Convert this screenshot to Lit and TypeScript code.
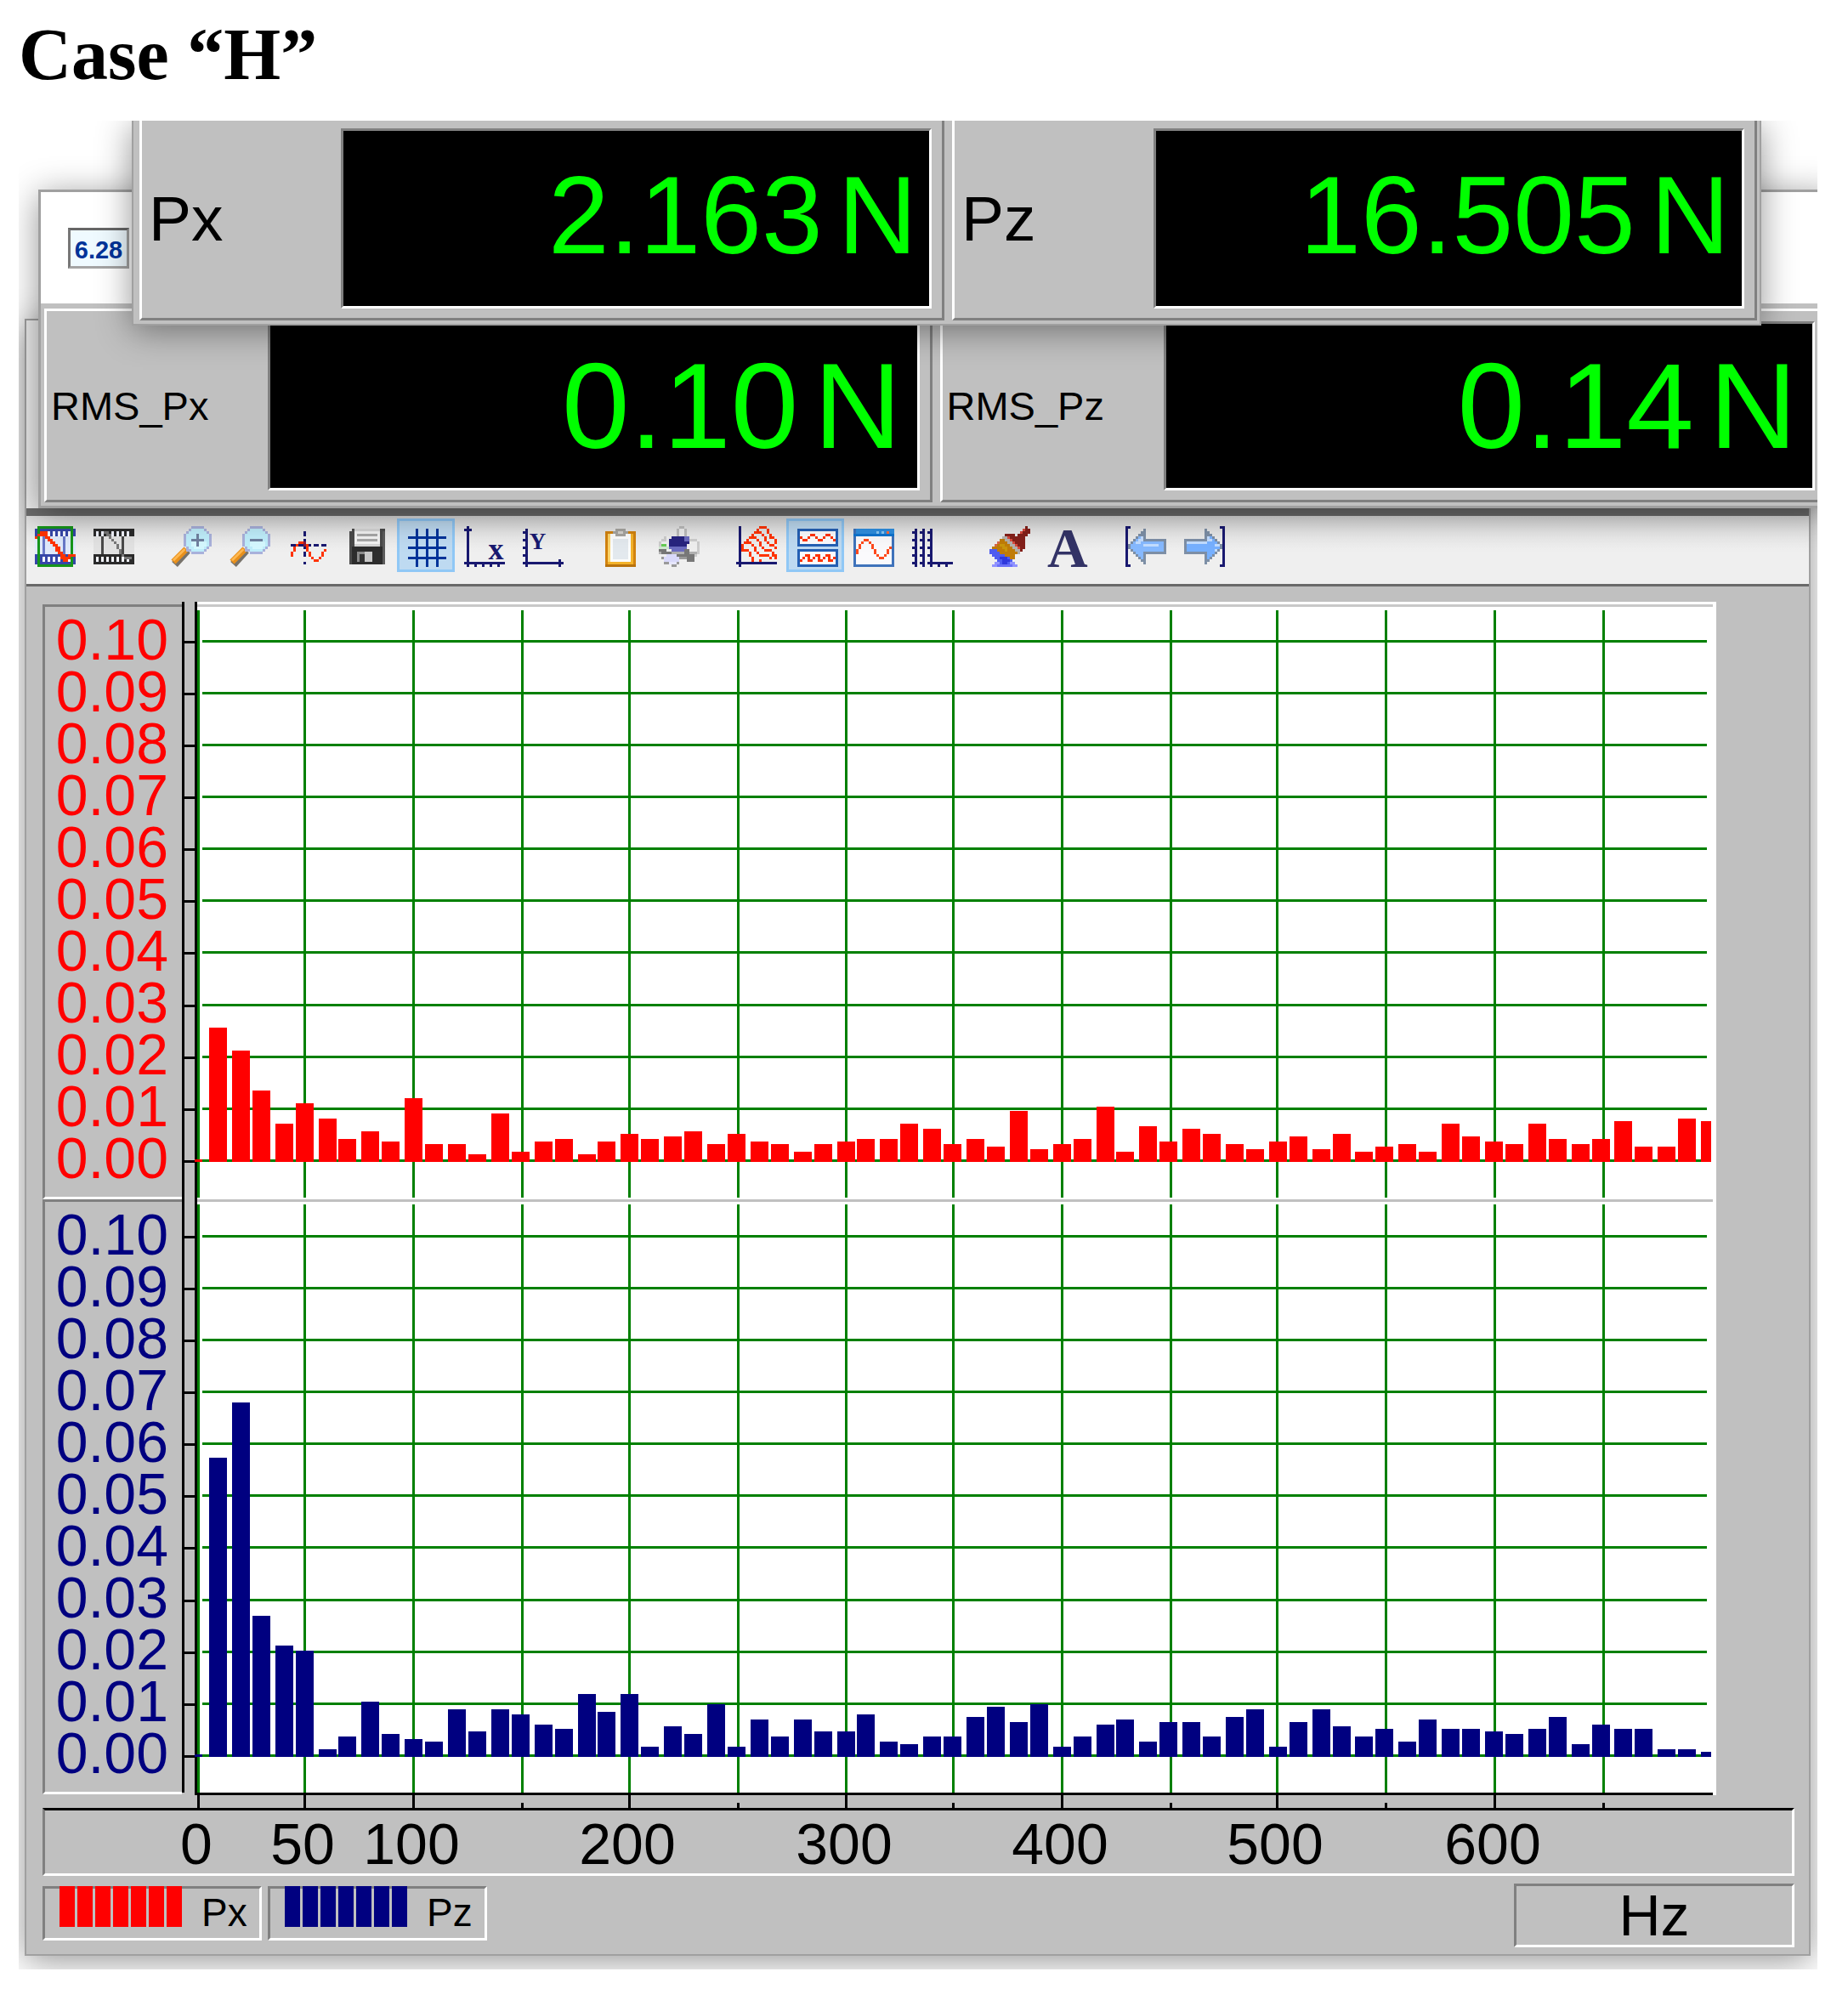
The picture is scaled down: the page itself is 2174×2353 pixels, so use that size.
import { LitElement, html, css, svg } from "lit";
import { customElement, property } from "lit/decorators.js";

/* Plot geometry: horizontal values are turned into percentages of the plot width. */
const PLOT_W = 1787;
const pct = (x: number) => `${((x / PLOT_W) * 100).toFixed(4)}%`;
const GRID_X = [1, 126, 254, 382, 508, 636, 763, 889, 1017, 1145, 1270, 1398, 1526, 1654];

const RED = [
  158, 131, 84, 45, 69, 51, 27, 36, 24, 75, 21, 21, 9, 57, 12, 24, 27, 9, 24, 33, 27, 30, 36, 21, 33, 24, 21, 12, 21, 24,
  27, 27, 45, 39, 21, 27, 18, 60, 15, 21, 27, 65, 12, 42, 24, 39, 33, 21, 15, 24, 30, 15, 33, 12, 18, 21, 12, 45, 30, 24,
  21, 45, 27, 21, 27, 48, 18, 18, 51, 48,
];
const BLUE = [
  352, 417, 166, 131, 125, 9, 24, 65, 27, 21, 18, 56, 30, 56, 50, 38, 33, 74, 53, 74, 12, 36, 27, 62, 12, 44, 24, 44, 30,
  30, 50, 18, 15, 24, 24, 47, 59, 41, 62, 12, 24, 38, 44, 18, 41, 41, 24, 47, 56, 12, 41, 56, 36, 24, 33, 18, 44, 33, 33,
  30, 27, 33, 47, 15, 38, 33, 33, 9, 9, 6,
];
const SCALE = ["0.10", "0.09", "0.08", "0.07", "0.06", "0.05", "0.04", "0.03", "0.02", "0.01", "0.00"];
const ZERO = [657, 1357];
const rowY = (zero: number, i: number) => Math.round(zero - i * 61.15);

/* Filled cells of a 16 by 16 icon, each given as "x y w h". */
const cells = (fill: string, list: string) =>
  svg`<path fill=${fill} d=${list
    .split(",")
    .map((c) => {
      const [x, y, w, h] = c.trim().split(" ");
      return `M${x} ${y}h${w}v${h}h-${w}z`;
    })
    .join("")} />`;

const NAVY = "#191970";
const HOT = "#ff3300";

const film = (frame: string, paper: string, bar: string) => svg`
  ${cells(frame, "0 1 16 3,0 11 16 4")}
  ${cells(paper, "0 4 16 7")}
  ${cells("#f4f6ff", "1 2 1 2,3 2 1 2,5 2 1 2,7 2 1 2,9 2 1 2,11 2 1 2,13 2 1 2,1 12 1 2,3 12 1 2,5 12 1 2,7 12 1 2,9 12 1 2,11 12 1 2,13 12 1 2")}
  ${cells(bar, "3 4 1 7,11 4 1 7")}`;

const lens = (sign: string) => svg`
  <path d="M6.5 9.5L1.5 15" stroke="#77726a" stroke-width="3" shape-rendering="auto" />
  <path d="M6 9L1 14" stroke="#e8901c" stroke-width="2.4" shape-rendering="auto" />
  <path d="M5.5 9L1 13.4" stroke="#ffb850" stroke-width="0.9" shape-rendering="auto" />
  <path fill="#a9b1db" d="M8 0h5v1h1v1h1v1h1v5h-1v1h-1v1h-1v1h-5v-1h-2v-2h-1v-5h1v-1h1v-1h1z" />
  <path fill="#bfeefb" d="M8 1h5v1h1v1h1v5h-1v1h-1v1h-5v-1h-1v-1h-1v-5h1v-1h1z" />
  <path fill="#d5f8ff" d="M8 6h6v2h-1v1h-4v-1h-1z" />
  ${cells("#70809f", sign)}`;

const ICONS: Record<string, unknown> = {
  record: svg`${film("#3646a8", "#dfe9fb", "#6878c8")}
    <rect x="1.5" y="0.5" width="13" height="15" fill="none" stroke="#16961a" />
    ${cells(HOT, "0 4 1 1,1 3 2 1,2 2 3 1,3 3 2 1,4 4 2 1,5 5 2 1,6 6 2 1,7 7 2 1,8 8 2 1,8 9 2 1,9 10 2 1,10 11 2 1,10 12 4 1,11 13 2 1,13 11 3 1")}`,
  frames: svg`${film("#2b2b2b", "#e2e2e2", "#4a4a4a")}
    ${cells("#777777", "4 2 2 1,5 3 2 1,6 4 1 1,7 5 1 1,8 6 1 1,9 7 1 1,9 8 1 1,10 9 1 1,10 10 1 1,11 11 1 1,12 12 3 1")}`,
  zoomIn: lens("8 5 5 1,10 3 1 5"),
  zoomOut: lens("8 5 5 1"),
  cursor: svg`
    ${cells(HOT, "1 10 1 2,2 8 1 2,3 7 1 1,4 6 3 1,6 7 2 1,7 8 1 2,8 10 1 2,9 12 1 1,10 13 2 1,12 12 1 1,13 10 1 2,14 9 1 1")}
    ${cells(NAVY, "6 2 1 2,6 5 1 1,6 8 1 1,6 10 1 2,6 14 1 1,1 7 2 1,4 7 2 1,8 7 1 1,10 7 2 1,13 7 2 1")}
    ${cells("#8a1a3a", "6 6 1 2")}`,
  save: svg`
    ${cells("#4a4a4a", "1 2 2 13,2 1 13 14")}${cells("#2d2d2d", "2 8 12 7")}
    ${cells("#f3f3f3", "3 2 10 5")}${cells("#d6d6d6", "3 7 10 1,3 1 10 1")}
    ${cells("#a8a8a8", "4 3 8 1,4 5 8 1")}
    ${cells("#8b8b8b", "4 10 3 4")}${cells("#c9c9c9", "7 10 3 4")}${cells("#333333", "5 11 2 3")}${cells("#5c5c5c", "14 2 1 13")}`,
  grid: cells("#003399", "4 1 1 15,8 1 1 15,12 1 1 15,1 4 15 1,1 8 15 1,1 12 15 1"),
  axisX: svg`${cells(NAVY, "1 0 1 16,0 1 3 1,0 14 16 1,4 15 1 1,7 15 1 1,10 15 1 1,13 15 1 1")}
    <text x="12.5" y="13" class="mark">x</text>`,
  axisY: svg`${cells(NAVY, "1 1 1 15,0 2 1 1,0 5 1 1,0 8 1 1,0 11 1 1,0 14 16 1,14 13 1 3")}
    <text x="5.8" y="9" class="mark small">Y</text>`,
  paste: svg`
    ${cells("#d2830f", "2 2 12 14")}${cells("#f3b22a", "3 3 10 12")}${cells("#fbd36a", "3 3 1 11")}
    ${cells("#fbfcfc", "4 3 8 11")}${cells("#e3e9ee", "5 5 6 8")}${cells("#b8720c", "2 15 12 1")}
    ${cells("#a7a5a0", "5 2 6 1,6 1 4 1,6 3 4 1")}${cells("#d5d3cf", "7 2 2 1")}`,
  print: svg`
    ${cells("#bdbdbd", "7 1 1 4,8 0 2 1,10 1 1 4")}${cells("#eeeeee", "8 1 2 4")}
    ${cells("#cccccc", "2 4 2 1,1 5 2 1,0 6 1 3,12 5 3 1,15 6 1 5,14 11 1 1")}
    ${cells("#eeeeee", "3 4 1 2,1 6 3 2,12 6 3 5")}${cells("#cfe8cf", "0 8 4 1")}${cells("#66cc55", "1 7 2 1")}
    ${cells("#28247f", "5 4 5 1,4 5 7 1,4 6 8 1,4 7 7 1")}${cells("#6c6cc0", "10 4 2 2,4 8 7 1,5 9 6 1")}
    ${cells("#777777", "0 9 3 1,1 10 4 1,10 9 2 2,6 11 5 1,11 11 3 3")}
    ${cells("#b0b0b0", "0 10 1 1,12 10 3 1,5 10 5 1")}
    ${cells("#d9d9fa", "3 11 4 1,2 12 6 2")}${cells("#999999", "1 12 1 1,2 14 2 1,5 15 2 1,7 14 1 1,8 12 3 1")}${cells("#e6e6fc", "4 14 3 1")}`,
  surface: svg`${cells(NAVY, "1 0 1 16,0 14 16 1")}
    ${cells(HOT, "9 0 3 1,8 1 1 1,7 2 1 1,6 3 1 1,5 4 1 1,4 5 1 1,3 6 1 1,2 7 1 3")}
    ${cells(HOT, "12 1 1 2,13 3 1 1,13 4 2 1,15 5 1 2")}
    ${cells(HOT, "8 2 2 1,10 3 1 1,11 4 1 2,12 6 1 1,13 7 2 1,15 8 1 1")}
    ${cells(HOT, "6 4 2 1,8 5 1 1,9 6 1 2,10 8 1 1,11 9 3 1,14 10 1 1")}
    ${cells(HOT, "4 6 2 1,6 7 1 1,7 8 1 2,8 10 1 1,9 11 4 1,14 11 2 1,13 12 1 1,15 12 1 1")}
    ${cells(HOT, "3 9 2 1,5 10 1 2,6 12 1 2,9 13 1 1")}`,
  stacked: svg`<g transform="translate(1 0)">
    ${cells("#2460b4", "0 1 16 7,0 9 16 7")}${cells("#fbfbfd", "1 2 14 5,1 10 14 5")}
    ${cells(HOT, "1 4 1 1,2 5 2 1,4 4 1 1,5 3 2 1,7 4 1 1,8 5 2 1,10 4 1 1,11 3 2 1,13 4 1 1,14 5 1 1")}
    ${cells(HOT, "1 13 1 1,2 12 1 1,3 11 2 1,4 12 1 1,4 13 2 1,6 12 1 1,7 11 2 1,8 12 1 1,8 13 2 1,10 12 1 1,11 11 2 1,12 12 1 1,12 13 2 1,14 12 1 1")}</g>`,
  panel: svg`
    ${cells("#3f73bb", "0 1 16 15")}${cells("#fafafc", "1 4 14 11")}${cells("#2f8fe0", "1 1 15 2")}${cells("#0f74cf", "0 3 16 1")}
    ${cells("#8cc8f4", "9 2 1 1,11 2 1 1")}${cells("#ff6a3a", "13 2 1 1")}
    ${cells("#ff4a1c", "1 9 1 2,2 7 1 2,3 6 1 1,4 5 2 1,6 6 1 1,7 7 1 2,8 9 1 2,9 11 1 1,10 12 2 1,12 11 1 1,13 9 1 2,14 8 1 1")}`,
  cascade: cells(
    NAVY,
    "1 1 1 15,4 1 1 15,7 1 1 15,0 2 1 1,0 5 1 1,0 8 1 1,0 11 1 1,0 14 1 1,3 2 1 1,3 5 1 1,3 8 1 1,3 11 1 1,3 14 1 1,6 2 1 1,6 5 1 1,6 8 1 1,6 11 1 1,6 14 1 1,7 14 9 1,10 15 1 1,13 15 1 1",
  ),
  brush: svg`
    ${cells("#84201a", "14 0 1 1,13 1 3 1,12 2 4 1,6 3 4 1,11 3 4 1,7 4 7 1,8 5 6 1,9 6 5 1,10 7 4 1,11 8 3 1,12 9 1 1")}
    ${cells("#d8493c", "13 1 1 1,12 2 1 1,7 4 1 1,8 5 1 1,9 6 1 1,10 7 1 1,11 8 1 1")}
    ${cells("#b4b0ac", "5 4 2 1,6 5 2 1,7 6 2 1,8 7 2 1,9 8 2 1,10 9 2 1,11 10 1 1")}
    ${cells("#c07c08", "4 5 2 1,3 6 4 1,2 7 6 1,1 8 8 1,3 9 7 1,4 10 7 1,6 11 4 1,8 12 2 1")}
    ${cells("#c9960c", "4 7 2 1,5 8 2 1,6 9 1 1")}${cells("#d8684a", "2 7 1 1,3 6 1 1")}
    ${cells("#4e5cf0", "0 9 3 1,0 10 4 1,1 11 5 1,2 12 6 1,3 13 6 1,2 14 7 1")}
    ${cells("#2f38dc", "4 12 3 1,5 13 3 1,5 14 2 1")}${cells("#8f92ff", "2 14 2 1,8 14 2 1,1 15 10 1")}${cells("#6a70f8", "3 15 6 1")}`,
  font: svg`<text x="7.6" y="16" class="big">A</text>`,
  back: svg`${cells(NAVY, "0 0 1 16,0 0 2 1,0 15 2 1")}
    <path fill="#7d8fa6" d="M7 1h1v4h8v6h-8v4h-1v-1h-1v-1h-1v-1h-1v-1h-1v-1h-1v-1h-1v-2h1v-1h1v-1h1v-1h1v-1h1v-1h1z" />
    <path fill="#86b9ff" d="M6 4h1v2h8v4h-8v3h-1v-1h-1v-1h-1v-1h-1v-1h-1v-2h1v-1h1v-1h1v-1h1z" />
    ${cells("#c3ddff", "6 4 1 2,5 5 1 2,4 6 1 1,7 7 6 1")}`,
  next: svg`${cells(NAVY, "15 0 1 16,14 0 1 1,14 15 1 1")}
    <path fill="#7d8fa6" d="M9 1h-1v4h-8v6h8v4h1v-1h1v-1h1v-1h1v-1h1v-1h1v-1h1v-2h-1v-1h-1v-1h-1v-1h-1v-1h-1v-1h-1z" />
    <path fill="#76b0ff" d="M10 4h-1v2h-8v4h8v3h1v-1h1v-1h1v-1h1v-1h1v-2h-1v-1h-1v-1h-1v-1h-1z" />
    ${cells("#c3ddff", "9 4 1 2,10 5 1 1,1 6 8 1,12 7 2 1,12 9 1 1")}`,
};

const TOOLBAR: [string, string][][] = [
  [["record", "Record"], ["frames", "Frames"]],
  [["zoomIn", "Zoom in"], ["zoomOut", "Zoom out"], ["cursor", "Cursor"], ["save", "Save"], ["grid", "Grid"], ["axisX", "X axis"], ["axisY", "Y axis"]],
  [["paste", "Copy"], ["print", "Print"]],
  [["surface", "Surface"], ["stacked", "Stacked"], ["panel", "Single"], ["cascade", "Cascade"]],
  [["brush", "Colours"], ["font", "Font"]],
  [["back", "Back"], ["next", "Next"]],
];
const PRESSED = ["grid", "stacked"];

@customElement("meter-cell")
export class MeterCell extends LitElement {
  @property() label = "";
  @property() value = "";

  static styles = css`
    :host {
      display: flex;
      flex: 1;
      min-width: 0;
      box-sizing: border-box;
      border: 3px solid #808080;
      border-left-color: #fff;
      border-top: var(--cell-top, 0) solid #fff;
      padding: var(--cell-pad, 9px) 12px 11px 0;
    }
    .label {
      flex: none;
      display: flex;
      align-items: center;
      box-sizing: border-box;
      width: var(--label-width, 234px);
      padding-left: var(--label-pad, 8px);
      font-size: var(--label-size, 75px);
      line-height: 1;
      color: #000;
    }
    .display {
      flex: 1;
      min-width: 0;
      display: flex;
      align-items: center;
      justify-content: flex-end;
      gap: 18px;
      height: var(--display-height, 206px);
      box-sizing: content-box;
      padding: 0 var(--display-pad, 14px) 0 0;
      border: 3px solid #fff;
      border-top-color: #808080;
      border-left-color: #808080;
      background: #000;
      color: #0f0;
      font-size: var(--value-size, 129px);
      line-height: 1;
    }
    .value,
    .unit {
      padding-bottom: var(--value-lift, 8px);
    }
  `;

  render() {
    return html`<div class="label">${this.label}</div>
      <div class="display"><span class="value">${this.value}</span><span class="unit">N</span></div>`;
  }
}

@customElement("tool-bar")
export class ToolBar extends LitElement {
  static styles = css`
    :host {
      display: flex;
      align-items: flex-start;
      gap: 23px;
      height: 77px;
      padding-top: 3px;
      background: linear-gradient(#dcdcdc, #eaeaea 24px, #efefef 40px);
      border-bottom: 3px solid #696969;
    }
    .group {
      display: flex;
      gap: 1px;
    }
    button {
      box-sizing: border-box;
      width: 68px;
      height: 63px;
      margin: 0;
      padding: 3px 0 0;
      border: 3px solid transparent;
      background: none;
      display: flex;
      align-items: center;
      justify-content: center;
    }
    button.on {
      background: #bedaf1;
      border-color: #90c8f6;
    }
    svg {
      width: 48px;
      height: 48px;
      overflow: visible;
    }
    .mark {
      font: bold 12px "Liberation Serif", serif;
      text-anchor: middle;
      fill: #191970;
    }
    .mark.small {
      font-size: 9px;
    }
    .big {
      font: bold 22px "Liberation Serif", serif;
      text-anchor: middle;
      fill: #333366;
    }
  `;

  render() {
    return TOOLBAR.map(
      (group) => html`<div class="group">
        ${group.map(
          ([icon, name]) => html`<button type="button" aria-label=${name} class=${PRESSED.includes(icon) ? "on" : ""}>
            <svg viewBox="0 0 16 16" shape-rendering="crispEdges" fill="none">${ICONS[icon]}</svg>
          </button>`,
        )}
      </div>`,
    );
  }
}

@customElement("spectrum-chart")
export class SpectrumChart extends LitElement {
  static styles = css`
    :host {
      display: block;
      padding: 18px 0 8px;
      background: #c0c0c0;
      color: #000;
    }
    svg {
      display: block;
      width: 100%;
      overflow: visible;
      shape-rendering: crispEdges;
    }
    .plot {
      display: grid;
      grid-template-columns: 164px 18px minmax(0, 1fr);
      margin: 0 109px 0 19px;
    }
    .scales {
      display: flex;
      flex-direction: column;
      padding-top: 3px;
    }
    .scale {
      box-sizing: border-box;
      height: 700px;
      border: 3px solid #808080;
      border-right: 0;
      border-bottom-color: #fff;
      padding: 8px 16px 0 0;
      font-size: 68px;
      line-height: 61px;
      text-align: right;
    }
    .px {
      color: #f00;
    }
    .pz {
      color: #000080;
    }
    .canvas {
      background: #fff;
    }
    .ticks {
      margin: 0 109px 0 201px;
    }
    .ruler {
      margin: 0 17px 0 19px;
      padding: 0 89px 0 179px;
      border: 3px solid #fff;
      border-left-color: #808080;
      border-top-color: #000;
    }
    .ruler text {
      font-size: 68px;
      text-anchor: middle;
    }
    .foot {
      display: flex;
      align-items: flex-start;
      gap: 7px;
      margin: 9px 17px 0 19px;
    }
    .sunken {
      box-sizing: border-box;
      border: 3px solid #fff;
      border-top-color: #808080;
      border-left-color: #808080;
    }
    .key {
      display: flex;
      gap: 23px;
      width: 258px;
      height: 64px;
      margin-top: 3px;
      padding-left: 17px;
      font-size: 46px;
      line-height: 56px;
    }
    .swatch {
      display: flex;
      gap: 3px;
      height: 48px;
      margin-top: -3px;
    }
    .swatch i {
      width: 18px;
    }
    .swatch .red {
      background: #f00;
    }
    .swatch .blue {
      background: #000080;
    }
    .unit {
      width: 330px;
      height: 75px;
      margin-left: auto;
      font-size: 68px;
      line-height: 69px;
      text-align: center;
    }
  `;

  private bars(data: number[], zero: number, fill: string) {
    return data.map((h, i) => {
      const x = 14 + Math.round(Math.ceil(8.5 * i) * 2.99);
      const w = i === data.length - 1 ? 12 : 21;
      return svg`<rect x=${pct(x)} y=${zero + 2 - h} width=${pct(w)} height=${h} fill=${fill} />`;
    });
  }

  render() {
    const rows = Array.from({ length: 11 }, (_, i) => i);
    return html`
      <div class="plot">
        <div class="scales">
          <div class="scale px">${SCALE.map((t) => html`<div>${t}</div>`)}</div>
          <div class="scale pz">${SCALE.map((t) => html`<div>${t}</div>`)}</div>
        </div>
        <svg height="1404">
          <rect x="0" y="0" width="3" height="1401" />
          <rect x="15" y="0" width="3" height="1404" />
          ${ZERO.map((z) => rows.map((i) => svg`<rect x="3" y=${rowY(z, i)} width="12" height="3" />`))}
        </svg>
        <svg class="canvas" height="1404">
          <rect x="0" y="3" width="99.8%" height="3" fill="#c8c8c8" />
          <rect x="0" y="703" width="99.8%" height="3" fill="#c0c0c0" />
          ${GRID_X.map(
            (x) => svg`<rect x=${pct(x - 1)} y="10" width="3" height="691" fill="#008000" />
              <rect x=${pct(x - 1)} y="709" width="3" height="692" fill="#008000" />`,
          )}
          ${ZERO.map((z) =>
            rows.map((i) => svg`<rect x=${pct(6)} y=${rowY(z, i) - 1} width=${pct(1770)} height="3" fill="#008000" />`),
          )}
          <rect x="-3" y="656" width="9" height="3" fill="#ff0000" />
          <rect x="-3" y="1356" width="9" height="3" fill="#000080" />
          ${this.bars(RED, ZERO[0], "#ff0000")} ${this.bars(BLUE, ZERO[1], "#000080")}
          <rect x="0" y="1401" width="99.8%" height="3" />
        </svg>
      </div>
      <div class="ticks">
        <svg height="15">
          ${GRID_X.map((x, i) => {
            const long = i < 2 || i % 2 === 0;
            return svg`<rect x=${pct(x - 1)} y=${long ? 0 : 9} width="3" height=${long ? 15 : 6} />`;
          })}
        </svg>
      </div>
      <div class="ruler">
        <svg height="74">
          ${[0, 50, 100, 200, 300, 400, 500, 600].map(
            (v) => svg`<text x=${pct(GRID_X[v / 50] - 2)} y="63">${v}</text>`,
          )}
        </svg>
      </div>
      <div class="foot">
        <div class="key sunken">
          <div class="swatch">${Array.from({ length: 7 }, () => html`<i class="red"></i>`)}</div>
          Px
        </div>
        <div class="key sunken">
          <div class="swatch">${Array.from({ length: 7 }, () => html`<i class="blue"></i>`)}</div>
          Pz
        </div>
        <div class="unit sunken">Hz</div>
      </div>
    `;
  }
}

@customElement("app-root")
export class AppRoot extends LitElement {
  static styles = css`
    :host {
      display: block;
      background: #fff;
      padding-bottom: 35px;
      font-family: "Liberation Sans", Arial, sans-serif;
    }
    h1 {
      margin: 0;
      padding: 14px 22px 28px;
      font: bold 86px/100px "Palatino Linotype", Palatino, "Liberation Serif", serif;
      color: #000;
    }
    .desktop {
      position: relative;
      overflow: hidden;
      margin: 0 36px 0 22px;
      padding: 233px 8px 16px 7px;
      background: #fff;
    }
    .window {
      box-sizing: border-box;
      border: 2px solid #a0a0a0;
      background: #c0c0c0;
      box-shadow: 0 6px 38px rgba(0, 0, 0, 0.42);
    }
    .caption {
      height: 221px;
      background: #eee;
      border-bottom: 9px solid #6c6c6c;
    }
    .rms {
      position: absolute;
      top: 81px;
      left: 23px;
      right: -19px;
      border-width: 3px;
    }
    .title {
      display: flex;
      align-items: center;
      height: 131px;
      padding: 0 32px;
      box-sizing: border-box;
      background: #fff;
    }
    .badge {
      box-sizing: border-box;
      width: 72px;
      height: 48px;
      border: 3px solid #a4a4a4;
      border-top-color: #666;
      border-left-color: #777;
      background: #effaff;
      color: #003399;
      font-size: 29px;
      font-weight: bold;
      line-height: 46px;
      text-align: center;
    }
    .cells {
      display: flex;
      gap: 9px;
    }
    .rms .cells {
      padding: 6px 4px 4px;
      --cell-top: 3px;
      --cell-pad: 12px;
      --label-width: 260px;
      --label-pad: 5px;
      --label-size: 47px;
      --display-height: 193px;
      --display-pad: 18px;
      --value-size: 143px;
      --value-lift: 0;
    }
    .force {
      position: absolute;
      top: 0;
      left: 133px;
      right: 66px;
      border-top: 0;
    }
    .force .cells {
      padding: 0 3px 4px 7px;
    }
  `;

  render() {
    return html`
      <h1>Case “H”</h1>
      <div class="desktop">
        <div class="window">
          <div class="caption"></div>
          <tool-bar></tool-bar>
          <spectrum-chart></spectrum-chart>
        </div>
        <div class="window rms">
          <div class="title"><div class="badge">6.28</div></div>
          <div class="cells">
            <meter-cell label="RMS_Px" value="0.10"></meter-cell>
            <meter-cell label="RMS_Pz" value="0.14"></meter-cell>
          </div>
        </div>
        <div class="window force">
          <div class="cells">
            <meter-cell label="Px" value="2.163"></meter-cell>
            <meter-cell label="Pz" value="16.505"></meter-cell>
          </div>
        </div>
      </div>
    `;
  }
}
